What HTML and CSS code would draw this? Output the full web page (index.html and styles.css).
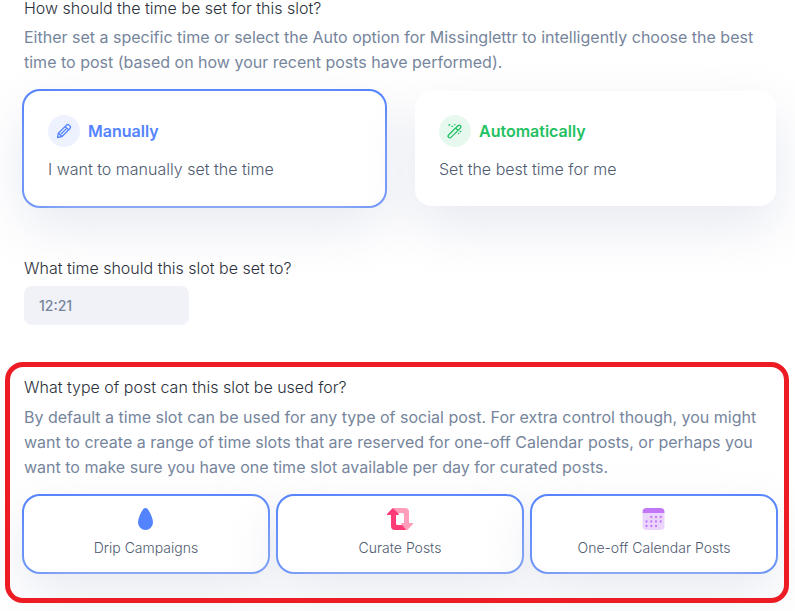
FILE: index.html
```html
<!DOCTYPE html>
<html lang="en">
<head>
<meta charset="utf-8">
<meta name="viewport" content="width=device-width, initial-scale=1">
<title>Time slot settings</title>
<link rel="stylesheet" href="styles.css">
</head>
<body>
<form class="slot-form">
  <fieldset class="group">
    <legend class="question">How should the time be set for this slot?</legend>
    <p class="help">Either set a specific time or select the Auto option for Missinglettr to intelligently choose the best time to post (based on how your recent posts have performed).</p>
    <div class="modes">
      <label class="card mode">
        <input class="choice" type="radio" name="mode" value="manual" checked>
        <span class="mode-title mode-title-manual">
          <span class="badge">
            <svg class="badge-icon" viewBox="0 0 16 16" aria-hidden="true"><path d="M1.500 14.500l.8-4.300 8.200-8.100a1.800 1.800 0 0 1 2.500 0l.9.900a1.800 1.800 0 0 1 0 2.500l-8.100 8.200zM2.500 10.200l3.300 3.300M9.200 3.500l3.400 3.400M5.300 10.700l4.800-4.800"/></svg>
          </span>
          Manually
        </span>
        <span class="mode-text">I want to manually set the time</span>
      </label>
      <label class="card mode">
        <input class="choice" type="radio" name="mode" value="auto">
        <span class="mode-title mode-title-auto">
          <span class="badge">
            <svg class="badge-icon" viewBox="0 0 16 16" aria-hidden="true"><path d="M1.600 12l9.300-9.300a1.600 1.600 0 0 1 2.400 2.400L4 14.400A1.600 1.600 0 0 1 1.600 12zM8.600 5l2.400 2.400M2 2h.8M5 3.400h.5M7.500 1.700h.4M13.200 8.500h.6M11.500 10.500h.2"/></svg>
          </span>
          Automatically
        </span>
        <span class="mode-text">Set the best time for me</span>
      </label>
    </div>
  </fieldset>

  <div class="group time">
    <label class="question" for="slot-time">What time should this slot be set to?</label>
    <input class="time-input" id="slot-time" type="text" value="12:21">
  </div>

  <fieldset class="group highlighted">
    <legend class="question">What type of post can this slot be used for?</legend>
    <p class="help">By default a time slot can be used for any type of social post. For extra control though, you might want to create a range of time slots that are reserved for one-off Calendar posts, or perhaps you want to make sure you have one time slot available per day for curated posts.</p>
    <div class="types">
      <label class="card type">
        <input class="choice" type="checkbox" name="type" value="drip" checked>
        <svg class="type-icon" viewBox="0 0 26 22" aria-hidden="true"><path fill="#5383ff" d="M12.500 0c-1.400 0-2.200.8-2.900 2C7.500 5.500 5 10.500 5 14.500a7.500 7.500 0 0 0 15 0c0-4-2.500-9-4.600-12.500C14.700.8 13.900 0 12.500 0z"/></svg>
        Drip Campaigns
      </label>
      <label class="card type">
        <input class="choice" type="checkbox" name="type" value="curate" checked>
        <svg class="type-icon" viewBox="0 0 26 22" aria-hidden="true"><path fill="#ff9dba" d="M6.500 0H18a4 4 0 0 1 4 4v11h3.300c.8 0 1 .8.500 1.300l-5 5.200c-.5.500-1 .500-1.500 0l-5-5.200c-.5-.5-.2-1.300.6-1.300H17V6.500A1.500 1.500 0 0 0 15.500 5h-5z"/><path fill="#ff3b78" d="M19.500 22H8a4 4 0 0 1-4-4V7H.7C-.1 7-.3 6.200.2 5.700l5-5.200c.5-.5 1-.5 1.500 0l5 5.200c.5.500.2 1.300-.6 1.300H9v8.500a1.500 1.500 0 0 0 1.500 1.500h4.800z"/></svg>
        Curate Posts
      </label>
      <label class="card type">
        <input class="choice" type="checkbox" name="type" value="calendar" checked>
        <svg class="type-icon" viewBox="0 0 26 22" aria-hidden="true"><path fill="#ecd5fd" d="M1.500 5h22v13a4 4 0 0 1-4 4h-14a4 4 0 0 1-4-4z"/><path fill="#c377f7" d="M1.500 5V4a4 4 0 0 1 4-4h14a4 4 0 0 1 4 4v1z"/><path stroke="#c377f7" stroke-width="2.300" stroke-linecap="round" d="M10.300 9h0M15 9h0M19.700 9h0M5.500 13.500h0M10.300 13.500h0M15 13.500h0M19.700 13.500h0M5.500 18h0M10.300 18h0M15 18h0"/></svg>
        One-off Calendar Posts
      </label>
    </div>
  </fieldset>
</form>
</body>
</html>
```
FILE: styles.css
```css
* {
  box-sizing: border-box;
}

body {
  margin: 0;
  background: #fff;
  color: #2b303b;
  font-family: Inter, "Liberation Sans", sans-serif;
  font-size: 16px;
}

.slot-form {
  padding: 0 19px 8px 24px;
}

.group {
  min-width: 0;
  margin: 0;
  padding: 0;
  border: 0;
}

.question {
  display: block;
  padding: 0;
  font-weight: 300;
  line-height: 16px;
}

.help {
  margin: 9px 0 16px;
  color: #76859c;
  line-height: 25px;
}

.card {
  position: relative;
  display: flex;
  flex-direction: column;
  border-radius: 16px;
  background: #fff;
  color: #4f5b70;
  cursor: pointer;
  box-shadow: 0 20px 54px rgba(214, 218, 232, 0.6);
}

.card:has(.choice:checked) {
  box-shadow: 0 20px 54px rgba(214, 218, 232, 0.6), 0 0 0 2px #4a7dff;
}

.choice {
  position: absolute;
  inset: 0;
  margin: 0;
  opacity: 0;
  cursor: pointer;
}

.modes {
  display: grid;
  grid-template-columns: 1fr 1fr;
  gap: 30px;
}

.mode {
  gap: 11px;
  padding: 24px 24px 26px;
}

.mode-title {
  display: flex;
  align-items: center;
  gap: 8px;
  font-weight: 600;
  line-height: 32px;
}

.mode-title-manual {
  color: #5383ff;
}

.mode-title-auto {
  color: #1fc162;
}

.badge {
  display: grid;
  place-items: center;
  width: 32px;
  height: 32px;
  border-radius: 50%;
  background: #eef2ff;
}

.mode-title-auto .badge {
  background: #e7f8ee;
}

.badge-icon {
  width: 16px;
  height: 16px;
  fill: none;
  stroke: currentColor;
  stroke-width: 1.3;
  stroke-linecap: round;
  stroke-linejoin: round;
}

.mode-text {
  font-weight: 300;
  line-height: 22px;
}

.time {
  position: relative;
  margin-top: 54px;
}

.time-input {
  display: block;
  width: 165px;
  height: 39px;
  margin-top: 10px;
  padding: 0 15px;
  border: 0;
  border-radius: 8px;
  background: #f1f2f8;
  color: #76859c;
  font: 500 14px Inter, "Liberation Sans", sans-serif;
}

.highlighted {
  position: relative;
  margin: 37px -13px 0 -19px;
  padding: 17px 13px 31px 19px;
}

.highlighted .question {
  float: left;
  width: 100%;
  margin-bottom: 10px;
}

.highlighted .help {
  clear: both;
}

.highlighted::after {
  content: "";
  position: absolute;
  inset: 0;
  border: 5px solid #ed1c24;
  border-radius: 18px;
  pointer-events: none;
}

.types {
  display: grid;
  grid-template-columns: repeat(3, 1fr);
  gap: 10px;
}

.type {
  align-items: center;
  gap: 8px;
  padding: 12px 12px 14px;
  font-size: 14px;
  font-weight: 300;
  line-height: 20px;
}

.type-icon {
  width: 26px;
  height: 22px;
}
```
